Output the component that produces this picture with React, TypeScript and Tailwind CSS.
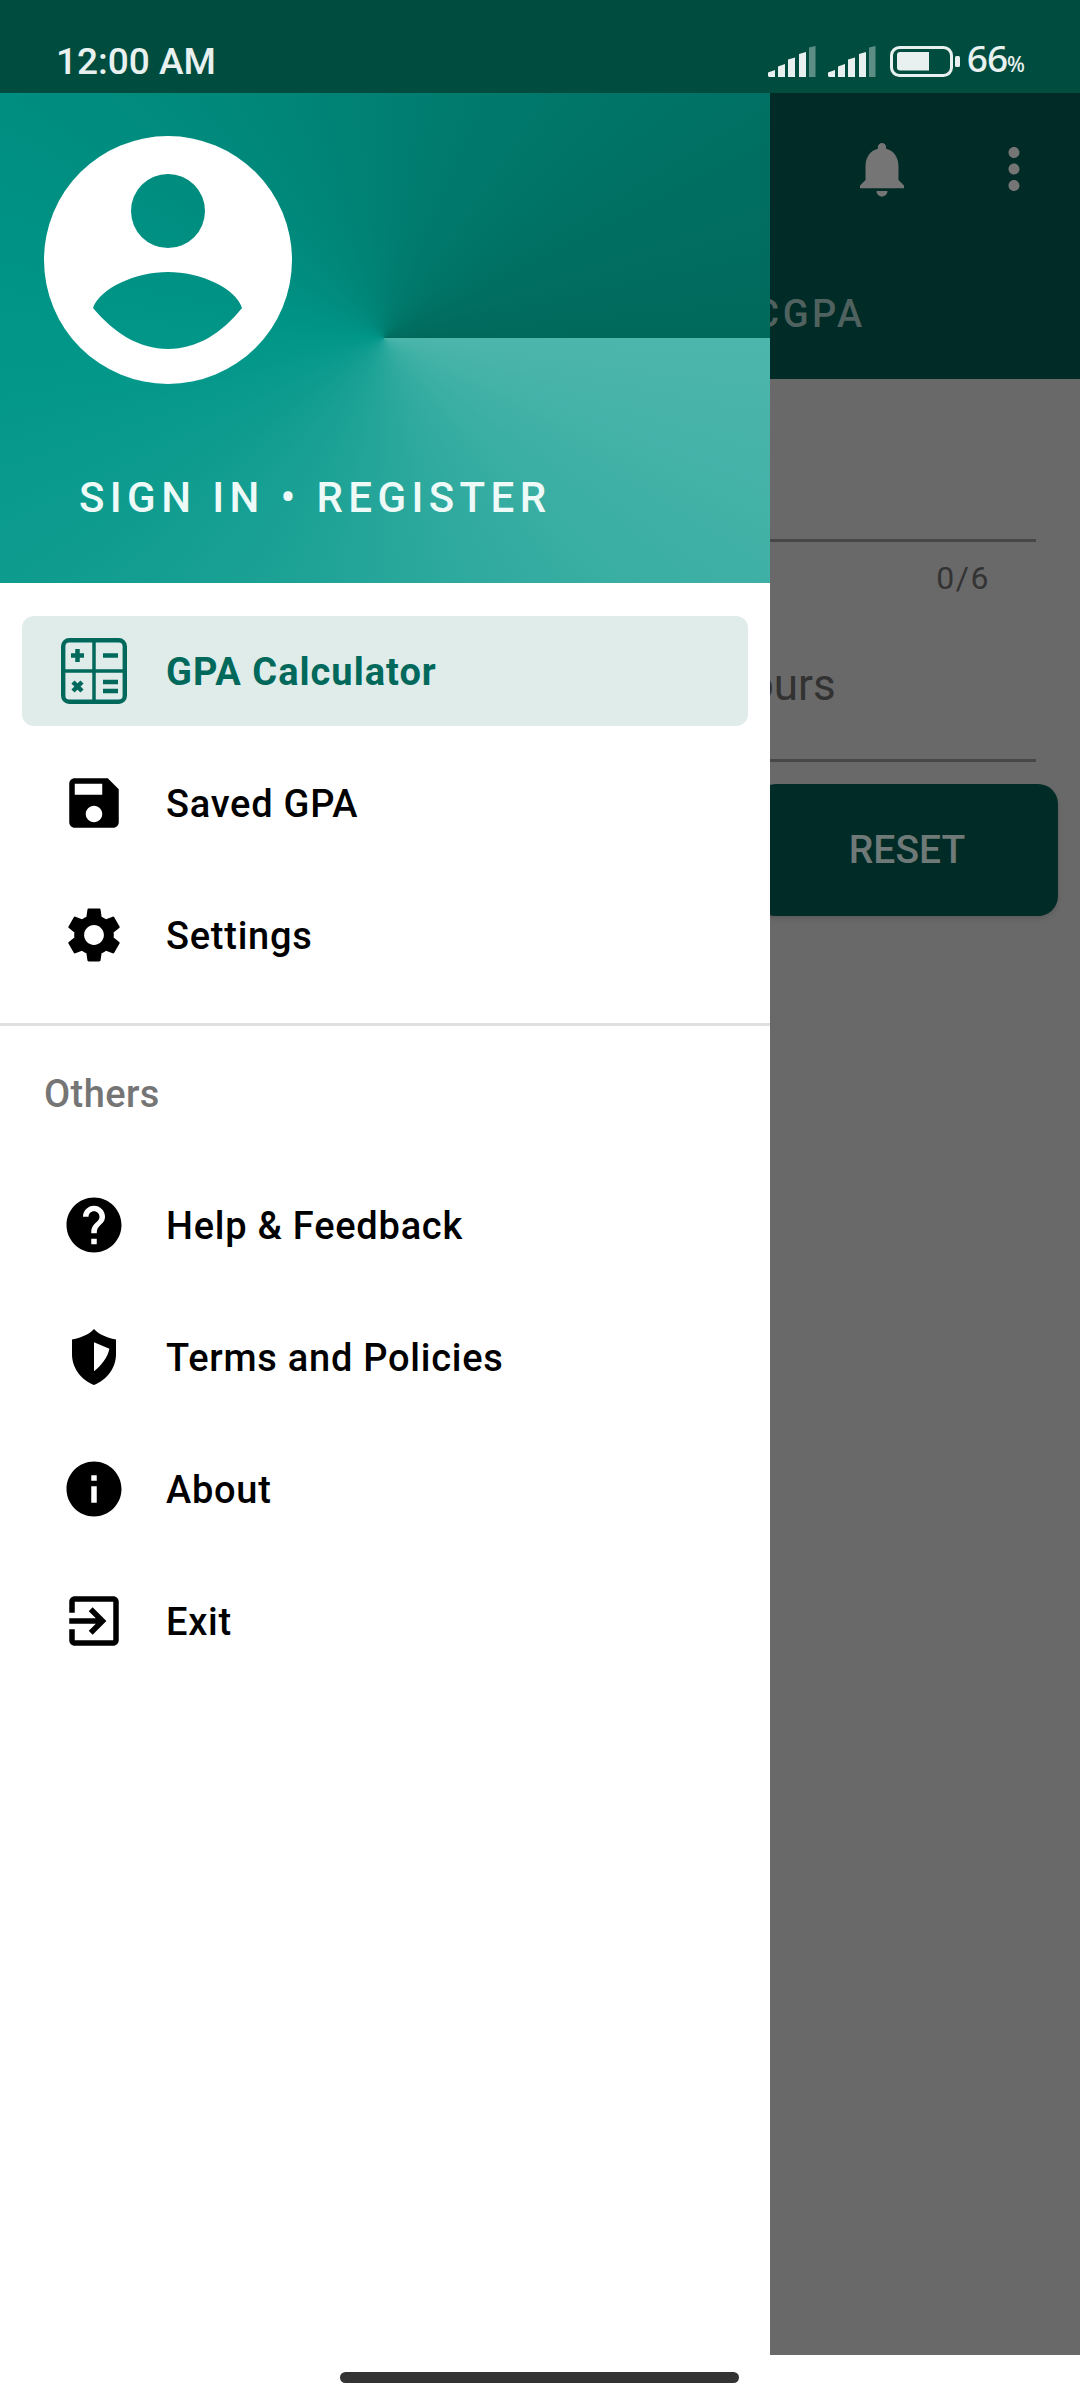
const MATERIAL = {
  bell: "M12 22c1.1 0 2-.9 2-2h-4c0 1.1.89 2 2 2zm6-6v-5c0-3.07-1.64-5.64-4.5-6.32V4c0-.83-.67-1.5-1.5-1.5s-1.5.67-1.5 1.5v.68C7.63 5.36 6 7.92 6 11v5l-2 2v1h16v-1l-2-2z",
  more: "M12 8c1.1 0 2-.9 2-2s-.9-2-2-2-2 .9-2 2 .9 2 2 2zm0 2c-1.1 0-2 .9-2 2s.9 2 2 2 2-.9 2-2-.9-2-2-2zm0 6c-1.1 0-2 .9-2 2s.9 2 2 2 2-.9 2-2-.9-2-2-2z",
  save: "M17 3H5c-1.11 0-2 .9-2 2v14c0 1.1.89 2 2 2h14c1.1 0 2-.9 2-2V7l-4-4zm-5 16c-1.66 0-3-1.34-3-3s1.34-3 3-3 3 1.34 3 3-1.34 3-3 3zm3-10H5V5h10v4z",
  settings:
    "M19.14 12.94c.04-.3.06-.61.06-.94 0-.32-.02-.64-.07-.94l2.03-1.58c.18-.14.23-.41.12-.61l-1.92-3.32c-.12-.22-.37-.29-.59-.22l-2.39.96c-.5-.38-1.03-.7-1.62-.94l-.36-2.54c-.04-.24-.24-.41-.48-.41h-3.84c-.24 0-.43.17-.47.41l-.36 2.54c-.59.24-1.13.57-1.62.94l-2.39-.96c-.22-.08-.47 0-.59.22L2.74 8.87c-.12.21-.08.47.12.61l2.03 1.58c-.05.3-.09.63-.09.94s.02.64.07.94l-2.03 1.58c-.18.14-.23.41-.12.61l1.92 3.32c.12.22.37.29.59.22l2.39-.96c.5.38 1.03.7 1.62.94l.36 2.54c.05.24.24.41.48.41h3.84c.24 0 .44-.17.47-.41l.36-2.54c.59-.24 1.13-.56 1.62-.94l2.39.96c.22.08.47 0 .59-.22l1.92-3.32c.12-.22.07-.47-.12-.61l-2.01-1.58zM12 15.6c-1.98 0-3.6-1.62-3.6-3.6s1.62-3.6 3.6-3.6 3.6 1.62 3.6 3.6-1.62 3.6-3.6 3.6z",
  help: "M12 2C6.48 2 2 6.48 2 12s4.48 10 10 10 10-4.48 10-10S17.52 2 12 2zm1 17h-2v-2h2v2zm2.07-7.75l-.9.92C13.45 12.9 13 13.5 13 15h-2v-.5c0-1.1.45-2.1 1.17-2.83l1.24-1.26c.37-.36.59-.86.59-1.41 0-1.1-.9-2-2-2s-2 .9-2 2H8c0-2.21 1.79-4 4-4s4 1.79 4 4c0 .88-.36 1.68-.93 2.25z",
  shield:
    "M12 1.8C13.6 3.6 16.2 4.9 20 5.6V11C20 16 16.6 20.4 12 22.2C7.4 20.4 4 16 4 11V5.6C7.8 4.9 10.4 3.6 12 1.8ZM12 6.6V17.2C14.8 15 16.9 12.2 17.6 9Z",
  info: "M12 2C6.48 2 2 6.48 2 12s4.48 10 10 10 10-4.48 10-10S17.52 2 12 2zm1 15h-2v-6h2v6zm0-8h-2V7h2v2z",
  exit: "M10.09 15.59L11.5 17l5-5-5-5-1.41 1.41L12.67 11H3v2h9.67l-2.58 2.59zM19 3H5c-1.11 0-2 .9-2 2v4h2V5h14v14H5v-4H3v4c0 1.1.89 2 2 2h14c1.1 0 2-.9 2-2V5c0-1.1-.9-2-2-2z",
};

const Icon = ({ d, className }: { d: string; className?: string }) => (
  <svg viewBox="0 0 24 24" fill="currentColor" fillRule="evenodd" className={`w-[66px] h-[66px] shrink-0 ${className ?? ""}`}>
    <path d={d} />
  </svg>
);

const CalculatorIcon = () => (
  <svg viewBox="0 0 66 66" fill="none" stroke="currentColor" className="w-[66px] h-[66px] shrink-0">
    <rect x="2.2" y="2.2" width="61.6" height="61.6" rx="6" strokeWidth="4.4" />
    <path d="M33 2v62M2 33h62" strokeWidth="3.5" />
    <path d="M16.5 11v13M10 17.5h13" strokeWidth="4.5" />
    <path d="M42 17.5h15" strokeWidth="4.5" />
    <path d="M12 44l9 9M21 44l-9 9" strokeWidth="4.5" />
    <path d="M42 44h15M42 53h15" strokeWidth="4.5" />
  </svg>
);

const SignalIcon = () => (
  <svg viewBox="0 0 48 31" fill="#e8f1ef" className="w-[48px] h-[31px]">
    <path d="M0 26.5L7 24V31H1.5C.7 31 0 30.3 0 29.5Z" />
    <path d="M10 20.5L17 18V31H10Z" />
    <path d="M20 13.5L27 11.5V31H20Z" />
    <path d="M31 8L38 6V31H31Z" />
    <path d="M41 1.5L47.5 0V31H41Z" opacity="0.4" />
  </svg>
);

const BatteryIcon = () => (
  <svg viewBox="0 0 70 31" className="w-[70px] h-[31px]">
    <rect x="1.5" y="1.5" width="60" height="28" rx="8" fill="none" stroke="#e8f1ef" strokeWidth="3" />
    <path d="M10 6H39V24.5H10C8 24.5 7 23.5 7 21.5V9C7 7 8 6 10 6Z" fill="#e8f1ef" />
    <rect x="65" y="10" width="5" height="11" rx="1.5" fill="#e8f1ef" />
  </svg>
);

const Avatar = () => (
  <svg viewBox="0 0 248 248" fill="#ffffff" fillRule="evenodd" className="w-[248px] h-[248px]">
    <path d="M124 0a124 124 0 1 0 0 248a124 124 0 1 0 0-248ZM124 38a37 37 0 1 1 0 74a37 37 0 1 1 0-74ZM49 172C56 152 92 136 124 136C156 136 192 152 198 172C178 197 153 213 124 213C95 213 70 197 49 172Z" />
  </svg>
);

const MenuItem = ({ icon, label, active }: { icon: React.ReactNode; label: string; active?: boolean }) => (
  <div
    className={`h-[110px] mx-[22px] pl-[39px] flex items-center gap-[39px] rounded-[12px] text-[38px] ${
      active ? "bg-[#e0ece9] text-[#00695c] font-bold tracking-[1px]" : "text-black font-medium tracking-[0.75px]"
    }`}
  >
    {icon}
    <span className="mt-[2px]">{label}</span>
  </div>
);

export default function App() {
  return (
    <div className="relative w-[1080px] h-[2400px] flex flex-col bg-white overflow-hidden font-[Roboto,sans-serif]">
      {/* status bar */}
      <div className="h-[93px] shrink-0 bg-[#004d40] flex items-center justify-between pt-[31px] pl-[56px] pr-[56px] text-[#e8f1ef]">
        <span className="text-[37px] font-medium leading-[62px]">12:00 AM</span>
        <div className="flex items-center -mt-[2px]">
          <SignalIcon />
          <div className="w-[12px]" />
          <SignalIcon />
          <div className="w-[14px]" />
          <BatteryIcon />
          <span className="ml-[7px] text-[37px] leading-[62px] font-medium tracking-[-1px] font-['Noto_Sans',sans-serif]">
            66<span className="text-[21px] tracking-[-1px]">%</span>
          </span>
        </div>
      </div>

      {/* page behind the drawer */}
      <div className="flex-1 flex flex-col bg-[#696969]">
        <div className="h-[286px] shrink-0 bg-[#002b26]">
          <div className="h-[157px] pb-[6px] flex items-center justify-end text-[#757575] pr-[33px] gap-[66px]">
            <Icon d={MATERIAL.bell} />
            <Icon d={MATERIAL.more} />
          </div>
          <div className="h-[129px] grid grid-cols-2 items-center text-center text-[38px] font-medium tracking-[3.5px] text-[#50625f]">
            <span />
            <span>CGPA</span>
          </div>
        </div>
        <div className="h-[163px] mr-[44px] border-b-[3px] border-[#474747]" />
        <div className="mt-[16px] pr-[90px] text-right text-[32px] leading-[40px] tracking-[1.5px] text-[#333333]">0/6</div>
        <div className="mt-[61px] ml-[590px] text-[44px] leading-[52px] text-[#323232]">Credit Hours</div>
        <div className="mt-[48px] mr-[44px] border-b-[3px] border-[#474747]" />
        <div className="mt-[22px] flex justify-end pr-[22px]">
          <div className="w-[302px] h-[132px] pt-[1px] flex items-center justify-center rounded-[20px] bg-[#002b26] shadow-md text-[39px] font-medium text-[#6f7a78]">
            RESET
          </div>
        </div>
      </div>

      {/* gesture bar */}
      <div className="h-[45px] shrink-0 bg-white flex items-center justify-center pr-[2px]">
        <div className="w-[399px] h-[11px] rounded-full bg-[#333333]" />
      </div>

      {/* navigation drawer */}
      <div className="absolute top-[93px] bottom-[45px] left-0 w-[770px] bg-white flex flex-col">
        <div className="h-[490px] shrink-0 flex flex-col bg-[conic-gradient(from_90deg_at_384px_245px,#4db6ac,#009688_50%,#00695c)]">
          <div className="mt-[43px] ml-[44px]">
            <Avatar />
          </div>
          <div className="mt-[90px] ml-[79px] text-[42px] leading-[48px] font-medium tracking-[5.4px] text-[#eefaf8]">
            SIGN IN • REGISTER
          </div>
        </div>
        <div className="mt-[33px] flex flex-col gap-[22px]">
          <MenuItem active icon={<CalculatorIcon />} label="GPA Calculator" />
          <MenuItem icon={<Icon d={MATERIAL.save} />} label="Saved GPA" />
          <MenuItem icon={<Icon d={MATERIAL.settings} />} label="Settings" />
        </div>
        <div className="mt-[33px] h-[3px] bg-[#e0e0e0]" />
        <div className="mt-[46px] ml-[44px] text-[38px] leading-[44px] font-medium tracking-[0.4px] text-[#757575]">Others</div>
        <div className="mt-[54px] flex flex-col gap-[22px]">
          <MenuItem icon={<Icon d={MATERIAL.help} />} label="Help & Feedback" />
          <MenuItem icon={<Icon d={MATERIAL.shield} />} label="Terms and Policies" />
          <MenuItem icon={<Icon d={MATERIAL.info} />} label="About" />
          <MenuItem icon={<Icon d={MATERIAL.exit} />} label="Exit" />
        </div>
      </div>
    </div>
  );
}
